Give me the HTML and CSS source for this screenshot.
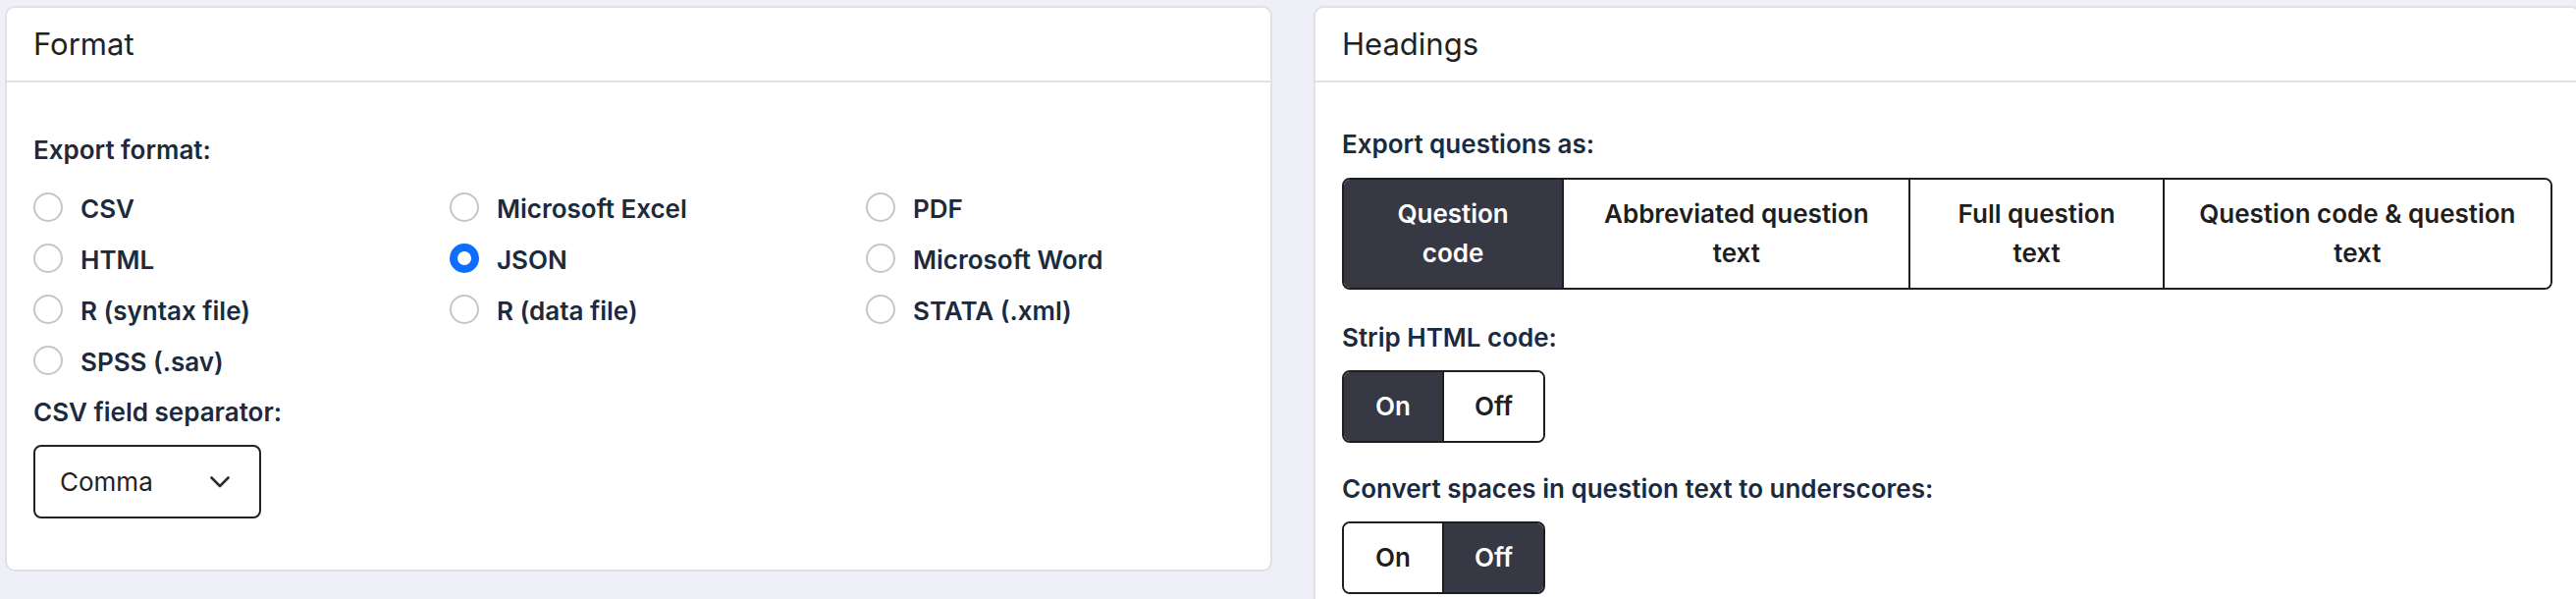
FILE: index.html
```html
<!DOCTYPE html>
<html lang="en">
<head>
<meta charset="utf-8">
<title>Export settings</title>
<link rel="stylesheet" href="styles.css">
</head>
<body>
<div class="page">
  <section class="card">
    <header class="card-header"><h2 class="card-title">Format</h2></header>
    <div class="card-body body-format">
      <div class="field-label">Export format:</div>
      <div class="radio-grid">
        <label class="radio"><span class="radio-dot"></span><span class="radio-text">CSV</span></label>
        <label class="radio"><span class="radio-dot"></span><span class="radio-text">Microsoft Excel</span></label>
        <label class="radio"><span class="radio-dot"></span><span class="radio-text">PDF</span></label>
        <label class="radio"><span class="radio-dot"></span><span class="radio-text">HTML</span></label>
        <label class="radio"><span class="radio-dot is-checked"></span><span class="radio-text">JSON</span></label>
        <label class="radio"><span class="radio-dot"></span><span class="radio-text">Microsoft Word</span></label>
        <label class="radio"><span class="radio-dot"></span><span class="radio-text">R (syntax file)</span></label>
        <label class="radio"><span class="radio-dot"></span><span class="radio-text">R (data file)</span></label>
        <label class="radio"><span class="radio-dot"></span><span class="radio-text">STATA (.xml)</span></label>
        <label class="radio"><span class="radio-dot"></span><span class="radio-text">SPSS (.sav)</span></label>
      </div>
      <div class="field-label">CSV field separator:</div>
      <div class="select">
        <span class="select-value">Comma</span>
        <svg class="chevron" width="20" height="12" viewBox="0 0 20 12"><polyline points="1.5,1.5 10,10 18.5,1.5" fill="none" stroke="#2b2b2b" stroke-width="2.6" stroke-linecap="round" stroke-linejoin="round"/></svg>
      </div>
    </div>
  </section>

  <section class="card">
    <header class="card-header"><h2 class="card-title">Headings</h2></header>
    <div class="card-body body-headings">
      <div class="field-label">Export questions as:</div>
      <div class="btn-group group-wide">
        <button class="seg is-active">Question code</button>
        <button class="seg">Abbreviated question text</button>
        <button class="seg">Full question text</button>
        <button class="seg">Question code &amp; question text</button>
      </div>
      <div class="field-label">Strip HTML code:</div>
      <div class="btn-group group-toggle">
        <button class="seg is-active">On</button>
        <button class="seg">Off</button>
      </div>
      <div class="field-label">Convert spaces in question text to underscores:</div>
      <div class="btn-group group-toggle">
        <button class="seg">On</button>
        <button class="seg is-active">Off</button>
      </div>
    </div>
  </section>
</div>
</body>
</html>
```

FILE: styles.css
```css
html, body {
  margin: 0;
  padding: 0;
  overflow: hidden;
}

body {
  background: #eeeff7;
  font-family: Inter, Roboto, "Liberation Sans", sans-serif;
  font-size: 26px;
  line-height: 40px;
  color: #1b2a3c;
}

.page {
  display: flex;
  align-items: flex-start;
  gap: 42px;
  padding: 6px 0 0 5px;
  width: 2700px;
}

.card {
  flex: 0 0 1291px;
  min-width: 0;
  box-sizing: border-box;
  background: #ffffff;
  border: 2px solid #e0e1e5;
  border-radius: 10px;
}

.card-header {
  height: 74px;
  display: flex;
  align-items: center;
  padding: 0 27px;
  border-bottom: 2px solid #e0e1e5;
}

.card-title {
  margin: 0;
  font-size: 31px;
  font-weight: 400;
  line-height: 40px;
  color: #222222;
}

.card-body {
  padding: 0 27px 52px;
}

.body-format {
  padding-top: 49px;
}

.body-headings {
  padding-top: 43px;
}

.field-label {
  font-weight: 600;
  color: #1b2a3c;
  margin-bottom: 13px;
}

.body-headings .field-label:first-child {
  margin-bottom: 14px;
}

.body-format .field-label:first-child {
  margin-bottom: 20px;
}

.radio-grid {
  display: grid;
  grid-template-columns: 424px 424px 1fr;
  grid-auto-rows: 40px;
  row-gap: 12px;
  margin-bottom: 11px;
}

.radio {
  display: flex;
  align-items: center;
  gap: 18px;
  font-weight: 600;
  color: #1b2a3c;
}

.radio-dot {
  box-sizing: border-box;
  width: 30px;
  height: 30px;
  border-radius: 50%;
  border: 2px solid #c6c6c6;
  background: #ffffff;
  flex: 0 0 30px;
  margin-top: -4px;
}

.radio-dot.is-checked {
  border: 8px solid #0d6efd;
}

.select {
  box-sizing: border-box;
  width: 232px;
  height: 75px;
  border: 2px solid #222222;
  border-radius: 8px;
  display: flex;
  align-items: center;
  justify-content: space-between;
  padding: 0 30px 0 25px;
  color: #222222;
}

.select-value {
  font-weight: 400;
}

.chevron {
  display: block;
}

.btn-group {
  display: grid;
  border: 2px solid #1e1e1e;
  border-radius: 8px;
  overflow: hidden;
  margin-bottom: 27px;
}

.group-wide {
  grid-template-columns: 222fr 353fr 258fr 395fr;
  margin-bottom: 29px;
}

.group-toggle {
  width: 207px;
  box-sizing: border-box;
  grid-template-columns: 100fr 103fr;
}

.seg {
  font-family: inherit;
  font-size: 26px;
  line-height: 40px;
  font-weight: 600;
  color: #1e1e1e;
  background: #ffffff;
  border: 0;
  margin: 0;
  padding: 15px 28px;
  text-align: center;
}

.group-toggle .seg {
  padding: 15px 0;
}

.seg + .seg {
  border-left: 2px solid #1e1e1e;
}

.seg.is-active {
  background: #363844;
  color: #ffffff;
}
```
